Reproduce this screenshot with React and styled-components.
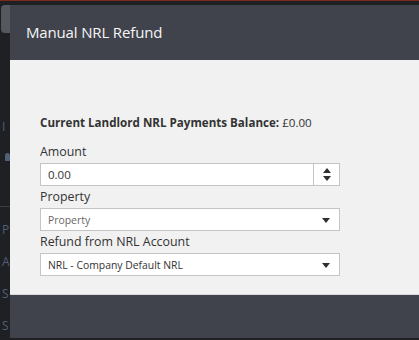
import React from "react";
import styled, { createGlobalStyle } from "styled-components";

const GlobalStyle = createGlobalStyle`
  html, body {
    margin: 0;
    padding: 0;
    background: #1e2024;
    overflow: hidden;
  }
  * {
    box-sizing: border-box;
  }
`;

const Page = styled.div`
  width: 419px;
  height: 340px;
  overflow: hidden;
  background: #1e2024;
  border-top: 1px solid #7a2c1a;
  display: flex;
  font-family: "Open Sans", "Liberation Sans", sans-serif;
`;

const Sidebar = styled.div`
  width: 10px;
  flex: none;
  overflow: hidden;
  padding-top: 4px;
  display: flex;
  flex-direction: column;
`;

const GhostButton = styled.div`
  width: 20px;
  height: 28px;
  flex: none;
  margin-left: 1px;
  border-radius: 4px;
  background: #55585e;
`;

const SideItem = styled.div`
  height: ${(p) => p.h}px;
  flex: none;
  display: flex;
  align-items: center;
  padding-left: 2px;
  color: #4f5f74;
  font-size: 12px;
  white-space: nowrap;
  border-bottom: ${(p) => (p.line ? "1px solid #3a3d43" : "none")};
`;

const SideIcon = styled.span`
  width: 6px;
  height: 8px;
  margin-left: 3px;
  border-radius: 3px 3px 1px 1px;
  background: #4f5f74;
`;

const Modal = styled.div`
  flex: none;
  width: 440px;
  margin-top: 4px;
  display: flex;
  flex-direction: column;
`;

const Header = styled.div`
  height: 55px;
  background: #40434b;
  display: flex;
  align-items: center;
  padding-left: 16px;
  padding-bottom: 1px;
`;

const Title = styled.h4`
  margin: 0;
  font-size: 15px;
  font-weight: 400;
  color: #f5f5f5;
  letter-spacing: -0.15px;
`;

const Body = styled.div`
  height: 235px;
  flex: none;
  background: #f1f1f1;
  border-bottom: 1px solid #d9d9d9;
  padding: 55px 0 0 30px;
`;

const Balance = styled.p`
  margin: 0 0 10px;
  font-size: 11.6px;
  line-height: 16px;
  color: #333;
  b {
    font-weight: 700;
  }
`;

const Label = styled.label`
  display: block;
  font-size: 12.4px;
  line-height: 22px;
  color: #333;
`;

const Field = styled.div`
  width: 300px;
  height: 23px;
  background: #fff;
  border: 1px solid #c4c4c4;
  display: flex;
  align-items: center;
`;

const FieldText = styled.span`
  flex: 1;
  padding-left: 7px;
  font-size: ${(p) => (p.small ? 10.4 : 11.5)}px;
  color: ${(p) => (p.muted ? "#666" : "#333")};
`;

const Spinner = styled.div`
  width: 26px;
  height: 100%;
  border-left: 1px solid #c4c4c4;
  display: flex;
  flex-direction: column;
  align-items: center;
  justify-content: center;
  gap: 3px;
`;

const Arrow = styled.span`
  width: 0;
  height: 0;
  border-left: ${(p) => p.w / 2}px solid transparent;
  border-right: ${(p) => p.w / 2}px solid transparent;
  ${(p) => (p.up ? "border-bottom" : "border-top")}: ${(p) => p.h}px solid #2f2f2f;
`;

const Caret = styled.div`
  width: 26px;
  display: flex;
  justify-content: center;
  padding-top: 1px;
`;

const Footer = styled.div`
  height: 43px;
  flex: none;
  background: #40434b;
`;

export default function App() {
  return (
    <>
      <GlobalStyle />
      <Page>
        <Sidebar>
          <GhostButton />
          <SideItem h={80} />
          <SideItem h={26}>I</SideItem>
          <SideItem h={8} />
          <SideItem h={20}>
            <SideIcon />
          </SideItem>
          <SideItem h={40} line />
          <SideItem h={44}>P</SideItem>
          <SideItem h={20}>A</SideItem>
          <SideItem h={44}>S</SideItem>
          <SideItem h={20}>S</SideItem>
        </Sidebar>
        <Modal>
          <Header>
            <Title>Manual NRL Refund</Title>
          </Header>
          <Body>
            <Balance>
              <b>Current Landlord NRL Payments Balance:</b> £0.00
            </Balance>
            <Label>Amount</Label>
            <Field>
              <FieldText>0.00</FieldText>
              <Spinner>
                <Arrow up w={8} h={5} />
                <Arrow w={8} h={5} />
              </Spinner>
            </Field>
            <Label>Property</Label>
            <Field>
              <FieldText small muted>
                Property
              </FieldText>
              <Caret>
                <Arrow w={8} h={5} />
              </Caret>
            </Field>
            <Label>Refund from NRL Account</Label>
            <Field>
              <FieldText small>NRL - Company Default NRL</FieldText>
              <Caret>
                <Arrow w={8} h={5} />
              </Caret>
            </Field>
          </Body>
          <Footer />
        </Modal>
      </Page>
    </>
  );
}
